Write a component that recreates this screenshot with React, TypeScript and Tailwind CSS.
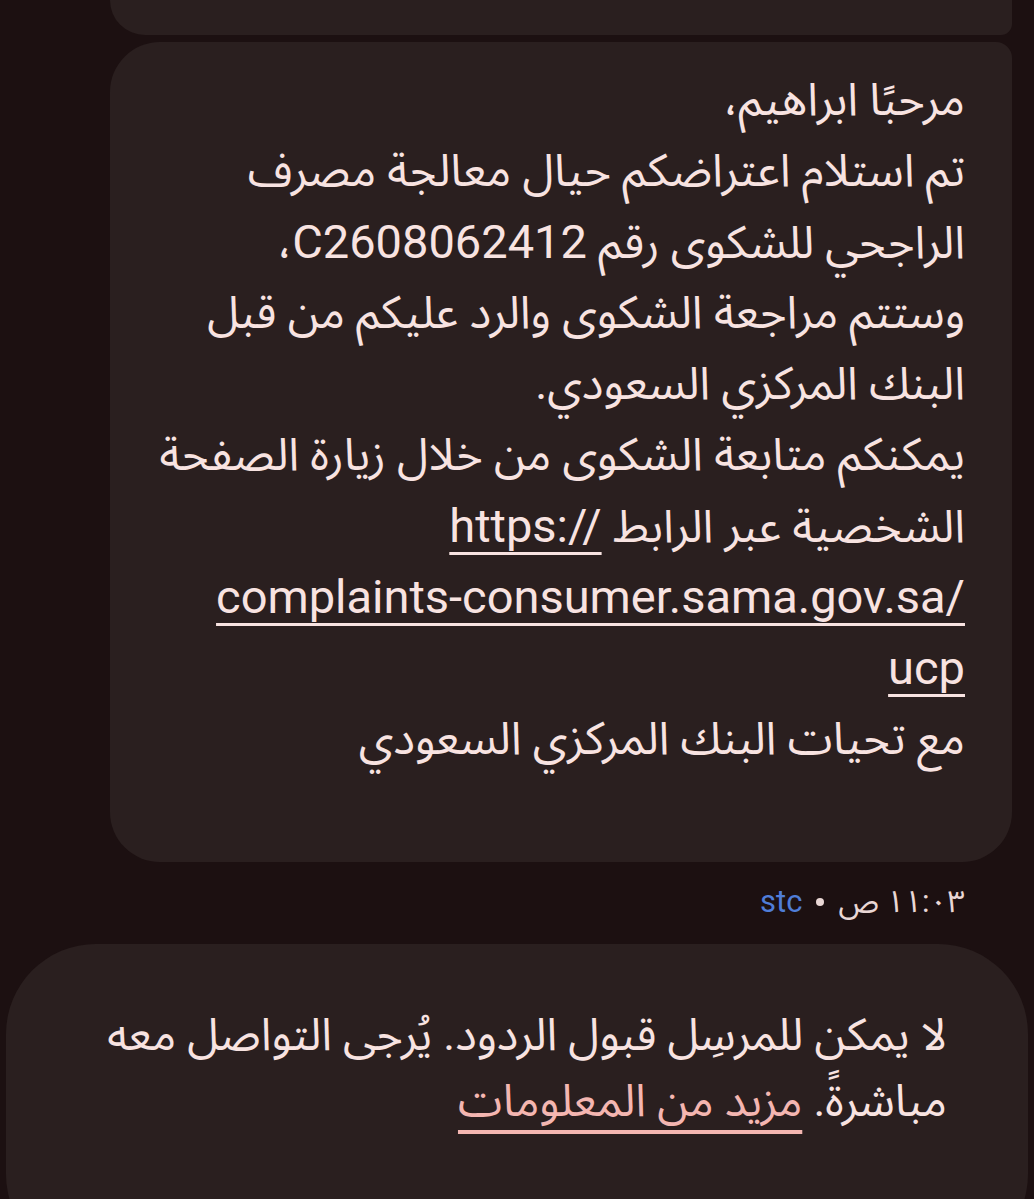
import React from 'react';

const FONT = "font-['Roboto','Noto_Sans_Arabic','DejaVu_Sans',sans-serif]";

const Line: React.FC<{ children: React.ReactNode }> = ({ children }) => (
  <div dir="rtl" className="h-[71px] leading-[71px] whitespace-nowrap text-right">
    {children}
  </div>
);

const Link: React.FC<{ children: React.ReactNode }> = ({ children }) => (
  <bdi dir="ltr" className="underline decoration-[3px] underline-offset-[10px] text-[47px]">
    {children}
  </bdi>
);

const App: React.FC = () => {
  return (
    <div className={`w-full min-h-[1199px] h-[1199px] overflow-hidden bg-[#1c1011] text-[#f8e3e1] ${FONT}`}>
      {/* previous bubble (cut off at top) */}
      <div className="ml-[110px] mr-[22px] h-[35px] bg-[#2a1f1f] rounded-bl-[50px] rounded-br-[16px]" />

      {/* main message */}
      <div className="mt-[7px] ml-[110px] mr-[22px] bg-[#2a1f1f] rounded-tl-[50px] rounded-bl-[50px] rounded-tr-[16px] rounded-br-[50px] pt-[22px] pb-[88px] pr-[47px] pl-[30px] text-[45.5px]">
        <Line>مرحبًا ابراهيم،</Line>
        <Line>تم استلام اعتراضكم حيال معالجة مصرف</Line>
        <Line>الراجحي للشكوى رقم <span className="text-[47px]">C2608062412</span>،</Line>
        <Line>وستتم مراجعة الشكوى والرد عليكم من قبل</Line>
        <Line>البنك المركزي السعودي.</Line>
        <Line>يمكنكم متابعة الشكوى من خلال زيارة الصفحة</Line>
        <Line>الشخصية عبر الرابط <Link>https://</Link></Line>
        <Line><Link>complaints-consumer.sama.gov.sa/</Link></Line>
        <Line><Link>ucp</Link></Line>
        <Line>مع تحيات البنك المركزي السعودي</Line>
      </div>

      {/* timestamp */}
      <div className="mt-[20px] h-[40px] flex justify-end items-center pr-[69px]">
        <div dir="rtl" className="flex items-center gap-[14px] text-[31px] whitespace-nowrap">
          <span className="text-[#e9d7d5]">١١:٠٣ ص</span>
          <span className="w-[8px] h-[8px] rounded-full bg-[#e9d7d5]" />
          <span className="text-[#4f7dd8]">stc</span>
        </div>
      </div>

      {/* system notice */}
      <div className="mt-[22px] mx-[6px] bg-[#2a1f1f] rounded-[90px] pt-[58px] pr-[81px] pl-[40px] h-[320px] text-[45px]">
        <div dir="rtl" className="h-[66px] leading-[66px] whitespace-nowrap text-right">
          لا يمكن للمرسِل قبول الردود. يُرجى التواصل معه
        </div>
        <div dir="rtl" className="h-[66px] leading-[66px] whitespace-nowrap text-right">
          مباشرةً.{' '}
          <span className="text-[#f4b6b1] underline decoration-[4px] underline-offset-[14px]">مزيد من المعلومات</span>
        </div>
      </div>
    </div>
  );
};

export default App;
